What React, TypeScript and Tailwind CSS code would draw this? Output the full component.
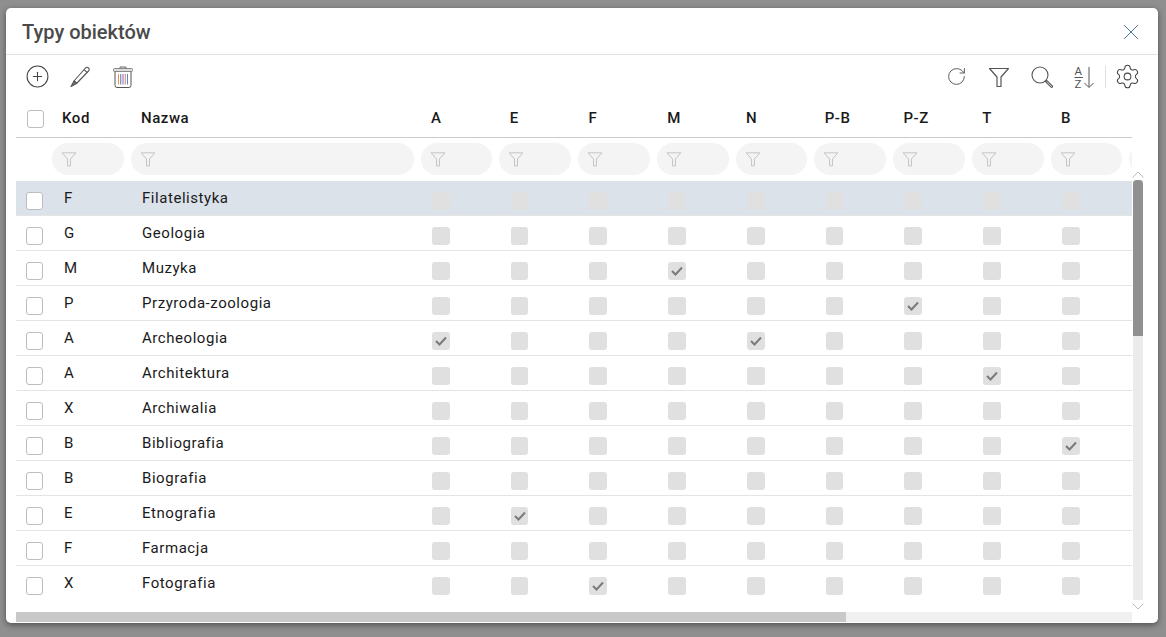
import { CirclePlus, RotateCw, Settings, X } from 'lucide-react';

const gridCols = 'grid grid-cols-[36px_79px_289.6px_repeat(10,78.75px)]';

const flagCols = ['A', 'E', 'F', 'M', 'N', 'P-B', 'P-Z', 'T', 'B'];

const rows = [
  { code: 'F', name: 'Filatelistyka', checked: [] as string[] },
  { code: 'G', name: 'Geologia', checked: [] },
  { code: 'M', name: 'Muzyka', checked: ['M'] },
  { code: 'P', name: 'Przyroda-zoologia', checked: ['P-Z'] },
  { code: 'A', name: 'Archeologia', checked: ['A', 'N'] },
  { code: 'A', name: 'Architektura', checked: ['T'] },
  { code: 'X', name: 'Archiwalia', checked: [] },
  { code: 'B', name: 'Bibliografia', checked: ['B'] },
  { code: 'B', name: 'Biografia', checked: [] },
  { code: 'E', name: 'Etnografia', checked: ['E'] },
  { code: 'F', name: 'Farmacja', checked: [] },
  { code: 'X', name: 'Fotografia', checked: ['F'] },
];

function Funnel({ className }: { className?: string }) {
  return (
    <svg viewBox="0 0 22 22" fill="none" stroke="currentColor" strokeWidth="1.2" className={className}>
      <path d="M1.5 2.5h19l-7.5 8.5v9.5h-4v-9.5z" strokeLinejoin="round" />
    </svg>
  );
}

function PencilIcon() {
  return (
    <svg viewBox="0 0 22 22" width="22" height="23" fill="none" stroke="#555" strokeWidth="1.1" strokeLinejoin="round">
      <path d="M5 15.5L16.5 2.5c1-1 2-1 3 0s1 2 0 3L7.5 18z" />
      <path d="M15 4.2l3.2 3M5 15.5L7.5 18" />
      <path d="M5 15.5L2 21l5.5-3z" fill="#777" />
    </svg>
  );
}

function Trash() {
  return (
    <svg viewBox="0 0 20 22" width="20" height="22" fill="none">
      <path d="M7 2.5V1h6v1.5" stroke="#666" />
      <rect x="0.5" y="2.5" width="19" height="3" rx="1" stroke="#888" fill="#ddd" />
      <path d="M2 5.5v14a2 2 0 0 0 2 2h12a2 2 0 0 0 2-2v-14" stroke="#555" />
      <path d="M5.5 8v10.5" stroke="#e09a40" />
      <path d="M7.75 8v10.5" stroke="#5a70c0" />
      <path d="M10 8v10.5" stroke="#9a60b0" />
      <path d="M12.25 8v10.5" stroke="#d08070" />
      <path d="M14.5 8v10.5" stroke="#5a88c8" />
    </svg>
  );
}

function SearchIcon() {
  return (
    <svg viewBox="0 0 22 22" width="22" height="22" fill="none" stroke="#555" strokeWidth="1.1">
      <circle cx="9" cy="9" r="8" />
      <path d="M14.5 15.5l1.2-1.2 5.6 5.6a0.8 0.8 0 0 1-1.2 1.2z" strokeLinejoin="round" />
    </svg>
  );
}

function SortAz() {
  return (
    <svg viewBox="0 0 24 24" width="24" height="24" fill="none" stroke="#555" strokeWidth="1" className="overflow-visible">
      <text x="0.5" y="10" fontFamily="Roboto, sans-serif" fontSize="11.5" fill="#555" stroke="none">A</text>
      <path d="M0.5 12.5h8.5" />
      <text x="0.5" y="23" fontFamily="Roboto, sans-serif" fontSize="11.5" fill="#555" stroke="none">Z</text>
      <path d="M15 2v20M10.5 18l4.5 4.5 4.5-4.5" />
    </svg>
  );
}

function RowCheck() {
  return <span className="block h-[18px] w-[17px] rounded-[3px] border border-[#bdbdbd] bg-white" />;
}

function FlagCheck({ checked }: { checked: boolean }) {
  return (
    <span className="flex h-[18px] w-[17.6px] items-center justify-center rounded-[3px] bg-[#e0e0e0]">
      {checked && (
        <svg viewBox="0 0 12 10" width="12" height="10" fill="none" stroke="#7a7a7a" strokeWidth="2">
          <path d="M1 5l3.5 3.5L11 1.5" />
        </svg>
      )}
    </span>
  );
}

function FilterPill() {
  return (
    <div className="flex h-8 w-[71.8px] items-center rounded-full bg-[#f4f4f4] pl-[9px] text-[#bdbdbd]">
      <Funnel className="h-[16px] w-[16px]" />
    </div>
  );
}

export default function App() {
  return (
    <div className="h-[637px] w-[1166px] overflow-hidden bg-[#8f8f8f] pl-[6px] pt-2 font-['Roboto',sans-serif]">
      <div className="h-[615px] w-[1152px] rounded-[5px] bg-white shadow-[0_2px_6px_rgba(0,0,0,0.45)]">
        {/* Title */}
        <div className="flex h-[47px] items-center justify-between border-b border-[#e2e2e2] pl-4 pr-[14px] pt-[1px]">
          <h1 className="text-[20px] font-medium text-[#4a4a4a]">Typy obiektów</h1>
          <X size={26} strokeWidth={0.9} className="text-[#3f6f96]" />
        </div>

        {/* Toolbar */}
        <div className="flex h-[45px] items-center justify-between pb-[2px] pl-[19px] pr-[17px]">
          <div className="flex items-center">
            <CirclePlus size={25} strokeWidth={1} className="mr-[19px] text-[#444]" />
            <PencilIcon />
            <div className="ml-[22px]">
              <Trash />
            </div>
          </div>
          <div className="flex items-center">
            <RotateCw size={21} strokeWidth={1.1} className="mr-[21px] text-[#555]" />
            <Funnel className="mr-[21px] h-[22px] w-[22px] text-[#555]" />
            <div className="mr-[21px]">
              <SearchIcon />
            </div>
            <SortAz />
            <span className="ml-[7px] mr-[8px] h-[22px] w-px bg-[#e0e0e0]" />
            <Settings size={27} strokeWidth={0.9} className="text-[#444]" />
          </div>
        </div>

        <div className="flex">
          {/* Table */}
          <div className="ml-[10px] w-[1116px]">
            <div className="h-[500px] overflow-hidden">
              <div className={`${gridCols} h-[38px] items-center border-b border-[#ccc] text-[15px] font-medium tracking-[0.55px] text-[#1a1a1a]`}>
                <div className="pl-[11px]">
                  <RowCheck />
                </div>
                <div className="pl-[10px]">Kod</div>
                <div className="pl-[10px]">Nazwa</div>
                {flagCols.map((col) => (
                  <div key={col} className="pl-[10.4px]">{col}</div>
                ))}
              </div>

              <div className={`${gridCols} h-[43px] items-center pb-[1px]`}>
                <div />
                <FilterPill />
                <div className="flex h-8 w-[283px] items-center rounded-full bg-[#f4f4f4] pl-[9px] text-[#bdbdbd]">
                  <Funnel className="h-[16px] w-[16px]" />
                </div>
                {flagCols.map((col) => (
                  <FilterPill key={col} />
                ))}
                <FilterPill />
              </div>

              {rows.map((row, index) => (
                <div
                  key={row.name}
                  className={`${gridCols} h-[35px] border-b border-[#e4e4e4] text-[15px] tracking-[0.55px] text-[#1a1a1a] ${index === 0 ? 'bg-[#dce2ea]' : ''}`}
                >
                  <div className="pl-[10px] pt-[11px]">
                    <RowCheck />
                  </div>
                  <div className="pl-3 pt-[6px]">{row.code}</div>
                  <div className="pl-[11px] pt-[6px]">{row.name}</div>
                  {flagCols.map((col) => (
                    <div key={col} className="pl-[11.4px] pt-[11px]">
                      <FlagCheck checked={row.checked.includes(col)} />
                    </div>
                  ))}
                  <div className="pl-[11.4px] pt-[11px]">
                    <FlagCheck checked={false} />
                  </div>
                </div>
              ))}
            </div>

            {/* Horizontal scrollbar */}
            <div className="mt-3 h-[10px] bg-[#f0f0f0]">
              <div className="h-full w-[830px] bg-[#c8c8c8]" />
            </div>
          </div>

          {/* Vertical scrollbar */}
          <div className="ml-px flex w-[10px] flex-col items-center pt-[71px]">
            <svg viewBox="0 0 12 7" width="12" height="7" fill="none" stroke="#bbb" className="shrink-0">
              <path d="M0.5 6.5L6 1l5.5 5.5" />
            </svg>
            <div className="mt-[2px] h-[420px] w-full shrink-0 bg-[#ebebeb]">
              <div className="h-[156px] w-full rounded-t-[4px] bg-[#909090]" />
            </div>
            <svg viewBox="0 0 12 7" width="12" height="7" fill="none" stroke="#bbb" className="mt-[3px] shrink-0">
              <path d="M0.5 0.5L6 6l5.5-5.5" />
            </svg>
          </div>
        </div>
      </div>
    </div>
  );
}
